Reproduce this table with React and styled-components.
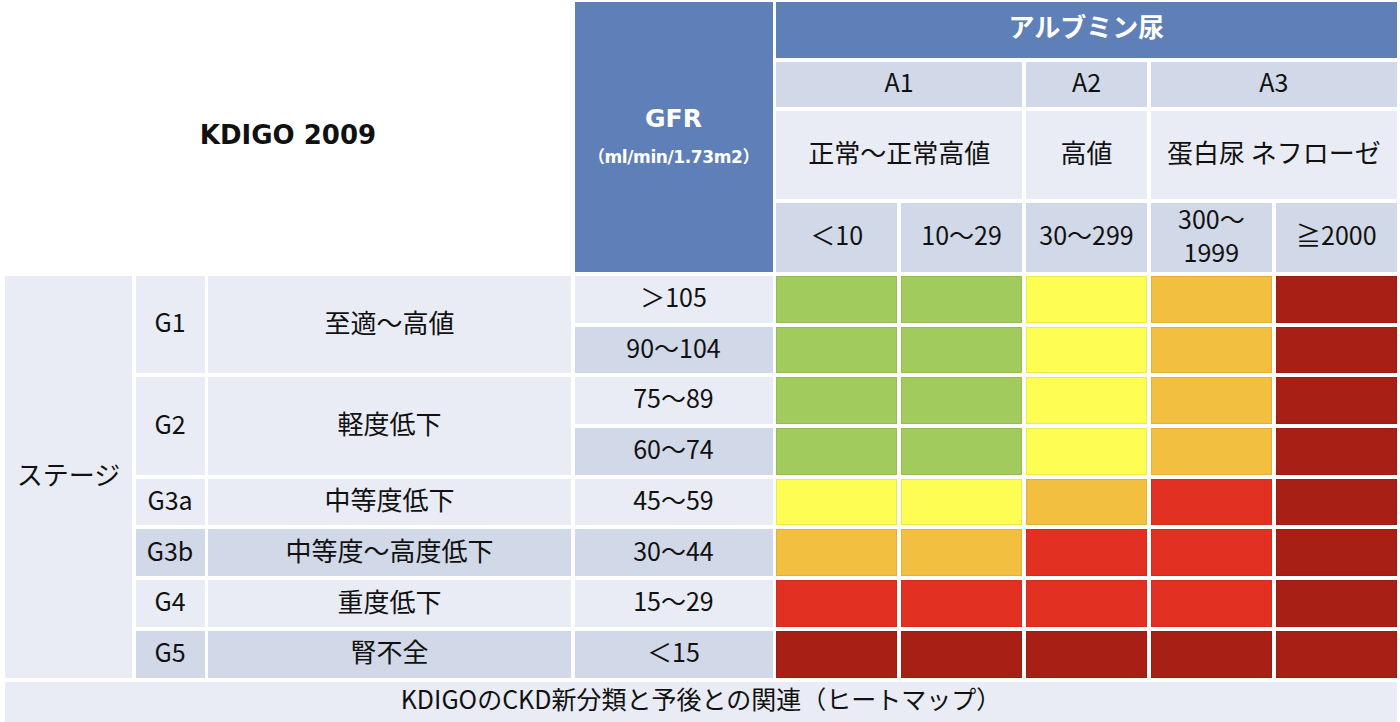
import styled, {createGlobalStyle} from 'styled-components';

const GlobalStyle = createGlobalStyle`
    html, body {
        margin: 0;
        padding: 0;
        background: #ffffff;
    }
    body {
        font-family: "Noto Sans CJK JP", "Noto Sans", sans-serif;
        color: #111111;
    }
`;

const tones = {
    white: '#ffffff',
    blue: '#5e7fb8',
    light: '#e9ecf4',
    dark: '#d1d8e7',
};

const heat = {
    g: '#a2cb5e',
    y: '#fefd54',
    o: '#f2bf41',
    r: '#e23122',
    d: '#a81f16',
};

const Page = styled.div`
    width: 1400px;
    height: 722px;
    overflow: hidden;
    padding: 2px 0 0 5px;
    box-sizing: border-box;
`;

const Table = styled.div`
    display: grid;
    grid-template-columns: 127px 69px 363px 198px repeat(5, 121.4px);
    grid-template-rows: 56px 45px 88px 69px repeat(8, 46.7px) 41px;
    column-gap: 3.5px;
    row-gap: 4px;
`;

const Cell = styled.div`
    grid-column: ${p => p.$col};
    grid-row: ${p => p.$row};
    background: ${p => tones[p.$tone || 'light']};
    display: flex;
    flex-direction: column;
    align-items: center;
    justify-content: center;
    text-align: center;
    font-size: 25px;
    line-height: 1.3;
    white-space: nowrap;
    padding-bottom: 6px;
    box-sizing: border-box;
`;

const TitleCell = styled(Cell)`
    font-family: "DejaVu Sans", "Noto Sans CJK JP", sans-serif;
    font-weight: bold;
    font-size: 26px;
    padding-bottom: 3px;
`;

const BlueCell = styled(Cell)`
    color: #ffffff;
    font-weight: bold;
`;

const GfrCell = styled(BlueCell)`
    padding-bottom: 0;
`;

const GfrTitle = styled.span`
    font-family: "DejaVu Sans", sans-serif;
    font-size: 25px;
    line-height: 1;
`;

const GfrUnit = styled.span`
    font-family: "DejaVu Sans", "Noto Sans CJK JP", sans-serif;
    font-size: 17px;
    margin-top: 15px;
    letter-spacing: -0.4px;
`;

const AlbuminTitle = styled(BlueCell)`
    font-size: 26px;
    padding-bottom: 8px;
`;

const DescCell = styled(Cell)`
    font-size: 26px;
`;

const HeatCell = styled.div`
    grid-column: ${p => p.$col};
    grid-row: ${p => p.$row};
    background: ${p => heat[p.$level]};
    box-shadow: inset 0 0 0 1px rgba(0, 0, 0, 0.07);
`;

const Footer = styled(Cell)`
    grid-column: 1 / -1;
    font-size: 25px;
    justify-content: flex-start;
    padding-top: 0;
    padding-bottom: 0;
`;

const gfrRows = [
    {value: '＞105', tone: 'light'},
    {value: '90～104', tone: 'dark'},
    {value: '75～89', tone: 'light'},
    {value: '60～74', tone: 'dark'},
    {value: '45～59', tone: 'light'},
    {value: '30～44', tone: 'dark'},
    {value: '15～29', tone: 'light'},
    {value: '＜15', tone: 'dark'},
];

const stages = [
    {key: 'G1', label: '至適～高値', start: 5, span: 2, tone: 'light'},
    {key: 'G2', label: '軽度低下', start: 7, span: 2, tone: 'light'},
    {key: 'G3a', label: '中等度低下', start: 9, span: 1, tone: 'light'},
    {key: 'G3b', label: '中等度～高度低下', start: 10, span: 1, tone: 'dark'},
    {key: 'G4', label: '重度低下', start: 11, span: 1, tone: 'light'},
    {key: 'G5', label: '腎不全', start: 12, span: 1, tone: 'dark'},
];

// 行ごとのヒートマップ色 (g:緑 y:黄 o:橙 r:赤 d:濃赤)
const heatMap = [
    'ggyod',
    'ggyod',
    'ggyod',
    'ggyod',
    'yyord',
    'oorrd',
    'rrrrd',
    'ddddd',
];

const albuminRanges = ['＜10', '10～29', '30～299', '300～\n1999', '≧2000'];

export default function App() {
    return (
        <Page>
            <GlobalStyle/>
            <Table>
                <TitleCell $col="1 / 4" $row="1 / 5" $tone="white">KDIGO 2009</TitleCell>

                <GfrCell $col="4" $row="1 / 5" $tone="blue">
                    <GfrTitle>GFR</GfrTitle>
                    <GfrUnit>（ml/min/1.73m2）</GfrUnit>
                </GfrCell>

                <AlbuminTitle $col="5 / 10" $row="1" $tone="blue">アルブミン尿</AlbuminTitle>

                <Cell $col="5 / 7" $row="2" $tone="dark">A1</Cell>
                <Cell $col="7" $row="2" $tone="dark">A2</Cell>
                <Cell $col="8 / 10" $row="2" $tone="dark">A3</Cell>

                <DescCell $col="5 / 7" $row="3">正常～正常高値</DescCell>
                <DescCell $col="7" $row="3">高値</DescCell>
                <DescCell $col="8 / 10" $row="3">蛋白尿 ネフローゼ</DescCell>

                {albuminRanges.map((range, i) => (
                    <Cell key={range} $col={i + 5} $row="4" $tone="dark">
                        {range.split('\n').map(line => <span key={line}>{line}</span>)}
                    </Cell>
                ))}

                <DescCell $col="1" $row="5 / 13">ステージ</DescCell>

                {stages.map(stage => (
                    <Cell key={stage.key}
                          $col="2"
                          $row={`${stage.start} / span ${stage.span}`}
                          $tone={stage.tone}>
                        {stage.key}
                    </Cell>
                ))}
                {stages.map(stage => (
                    <DescCell key={stage.label}
                              $col="3"
                              $row={`${stage.start} / span ${stage.span}`}
                              $tone={stage.tone}>
                        {stage.label}
                    </DescCell>
                ))}

                {gfrRows.map((row, i) => (
                    <Cell key={row.value} $col="4" $row={i + 5} $tone={row.tone}>{row.value}</Cell>
                ))}

                {heatMap.map((levels, r) =>
                    levels.split('').map((level, c) => (
                        <HeatCell key={`${r}-${c}`} $col={c + 5} $row={r + 5} $level={level}/>
                    ))
                )}

                <Footer $row="13">KDIGOのCKD新分類と予後との関連（ヒートマップ）</Footer>
            </Table>
        </Page>
    );
}
